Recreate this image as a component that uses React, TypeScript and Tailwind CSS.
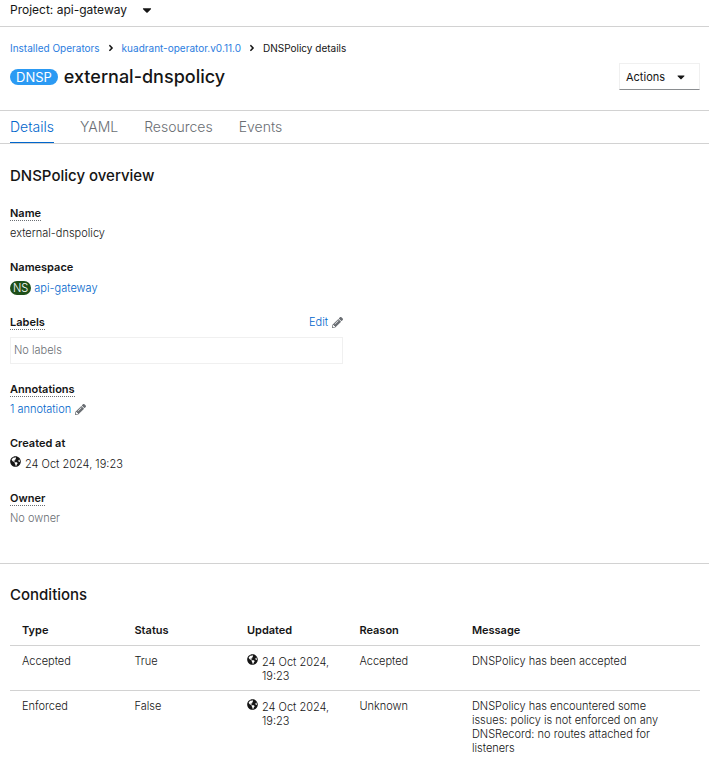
import type { ReactNode } from "react";
import { FaAngleRight, FaCaretDown, FaGlobeAmericas, FaPencilAlt } from "react-icons/fa";

const tabs = ["Details", "YAML", "Resources", "Events"];

const conditions = [
  {
    type: "Accepted",
    status: "True",
    reason: "Accepted",
    message: "DNSPolicy has been accepted",
  },
  {
    type: "Enforced",
    status: "False",
    reason: "Unknown",
    message:
      "DNSPolicy has encountered some issues: policy is not enforced on any DNSRecord: no routes attached for listeners",
  },
];

function Term({ children, help = false }: { children: ReactNode; help?: boolean }) {
  return (
    <dt className="flex h-4 font-semibold">
      {help ? (
        <button type="button" className="h-4 border-b border-dotted border-[#6a6e73] leading-4 font-semibold">
          {children}
        </button>
      ) : (
        <span className="leading-4">{children}</span>
      )}
    </dt>
  );
}

function Timestamp() {
  return (
    <div className="flex gap-1">
      <FaGlobeAmericas className="size-[11px] shrink-0" />
      <time dateTime="2024-10-24T19:23" className="pt-px">
        24 Oct 2024, 19:23
      </time>
    </div>
  );
}

export default function App() {
  return (
    <div className="bg-white font-[Inter,'Liberation_Sans',sans-serif] text-[11px] leading-[14px] font-light text-[#151515]">
      <div className="flex h-[27px] items-start border-b border-[#d2d2d2] pl-[10px]">
        <button type="button" className="flex items-center gap-[13px] text-[12px] leading-5 font-normal">
          Project: api-gateway
          <FaCaretDown className="size-[14px]" />
        </button>
      </div>

      <header className="pr-[9px] pl-[10px]">
        <nav aria-label="Breadcrumb" className="pt-[14px]">
          <ol className="flex items-center gap-[6px] text-[10px] leading-[14px] font-normal">
            <li><a href="#operators" className="text-[#2b7de0]">Installed Operators</a></li>
            <li aria-hidden="true"><FaAngleRight className="size-2.5" /></li>
            <li><a href="#kuadrant" className="text-[#2b7de0]">kuadrant-operator.v0.11.0</a></li>
            <li aria-hidden="true"><FaAngleRight className="size-2.5" /></li>
            <li>DNSPolicy details</li>
          </ol>
        </nav>
        <div className="flex h-[55px] items-start justify-between pt-2">
          <h1 className="flex items-center gap-[6px] text-[18px] leading-7 font-medium">
            <span className="h-4 rounded-full bg-[#2b9af3] px-[6px] text-[13px] leading-4 font-normal text-white">DNSP</span>
            external-dnspolicy
          </h1>
          <button type="button" className="flex h-[27px] w-[81px] items-center justify-between border border-[#f0f0f0] border-b-[#8a8d90] pr-3 pl-[6px] font-normal">
            Actions
            <FaCaretDown className="size-3" />
          </button>
        </div>
      </header>

      <nav aria-label="Sections" className="flex h-[34px] gap-[26px] border-y border-[#d2d2d2] pl-[10px] text-[14px] leading-[31px]">
        {tabs.map((tab, index) => (
          <a
            key={tab}
            href={`#${tab.toLowerCase()}`}
            className={index === 0 ? "border-b border-[#0066cc] text-[#0066cc]" : "text-[#6a6e73]"}
          >
            {tab}
          </a>
        ))}
      </nav>

      <section className="h-[420px] border-b border-[#d2d2d2] pt-[21px] pr-[9px] pl-[10px]">
        <h2 className="text-[15px] leading-[22px] font-medium">DNSPolicy overview</h2>
        <div className="mt-[18px] grid grid-cols-2 gap-6">
          <dl>
            <Term help>Name</Term>
            <dd className="mt-1 leading-4">external-dnspolicy</dd>

            <div className="mt-[18px]">
              <Term>Namespace</Term>
              <dd className="mt-[5px] flex items-center gap-[3px] leading-4">
                <span className="h-[14px] rounded-full bg-[#1e4f18] px-[3px] leading-[14px] text-white">NS</span>
                <a href="#namespace" className="text-[#0066cc]">api-gateway</a>
              </dd>
            </div>

            <div className="mt-[18px]">
              <div className="flex items-center justify-between">
                <Term help>Labels</Term>
                <dd>
                  <button type="button" className="flex items-center gap-1 text-[#0066cc]">
                    Edit <FaPencilAlt className="size-[11px] text-[#6a6e73]" />
                  </button>
                </dd>
              </div>
              <dd className="mt-[7px] h-[27px] border border-[#f0f0f0] pl-[3px] leading-[25px] text-[#6a6e73]">No labels</dd>
            </div>

            <div className="mt-[17px]">
              <Term help>Annotations</Term>
              <dd className="mt-1">
                <button type="button" className="flex items-center gap-1 leading-4 text-[#0066cc]">
                  1 annotation <FaPencilAlt className="size-[11px] text-[#6a6e73]" />
                </button>
              </dd>
            </div>

            <div className="mt-[18px]">
              <Term>Created at</Term>
              <dd className="mt-[5px]"><Timestamp /></dd>
            </div>

            <div className="mt-[19px]">
              <Term help>Owner</Term>
              <dd className="mt-1 leading-4 text-[#6a6e73]">No owner</dd>
            </div>
          </dl>
        </div>
      </section>

      <section className="pt-5 pr-[9px] pl-[10px]">
        <h2 className="text-[15px] leading-[22px] font-medium">Conditions</h2>
        <table className="mt-[9px] w-full table-fixed text-left">
          <thead>
            <tr className="h-[30px] border-b border-[#d2d2d2]">
              <th className="w-[16.3%] pl-3 font-semibold">Type</th>
              <th className="w-[16.3%] pl-3 font-semibold">Status</th>
              <th className="w-[16.3%] pl-3 font-semibold">Updated</th>
              <th className="w-[16.3%] pl-3 font-semibold">Reason</th>
              <th className="pl-3 font-semibold">Message</th>
            </tr>
          </thead>
          <tbody>
            {conditions.map((row) => (
              <tr key={row.type} className="border-b border-[#d2d2d2] align-top last:border-b-0">
                <td className="pt-2 pb-[7px] pl-3">{row.type}</td>
                <td className="pt-2 pb-[7px] pl-3">{row.status}</td>
                <td className="pt-2 pr-3 pb-[7px] pl-3"><Timestamp /></td>
                <td className="pt-2 pb-[7px] pl-3">{row.reason}</td>
                <td className="pt-2 pr-8 pb-[7px] pl-3">{row.message}</td>
              </tr>
            ))}
          </tbody>
        </table>
      </section>
    </div>
  );
}
